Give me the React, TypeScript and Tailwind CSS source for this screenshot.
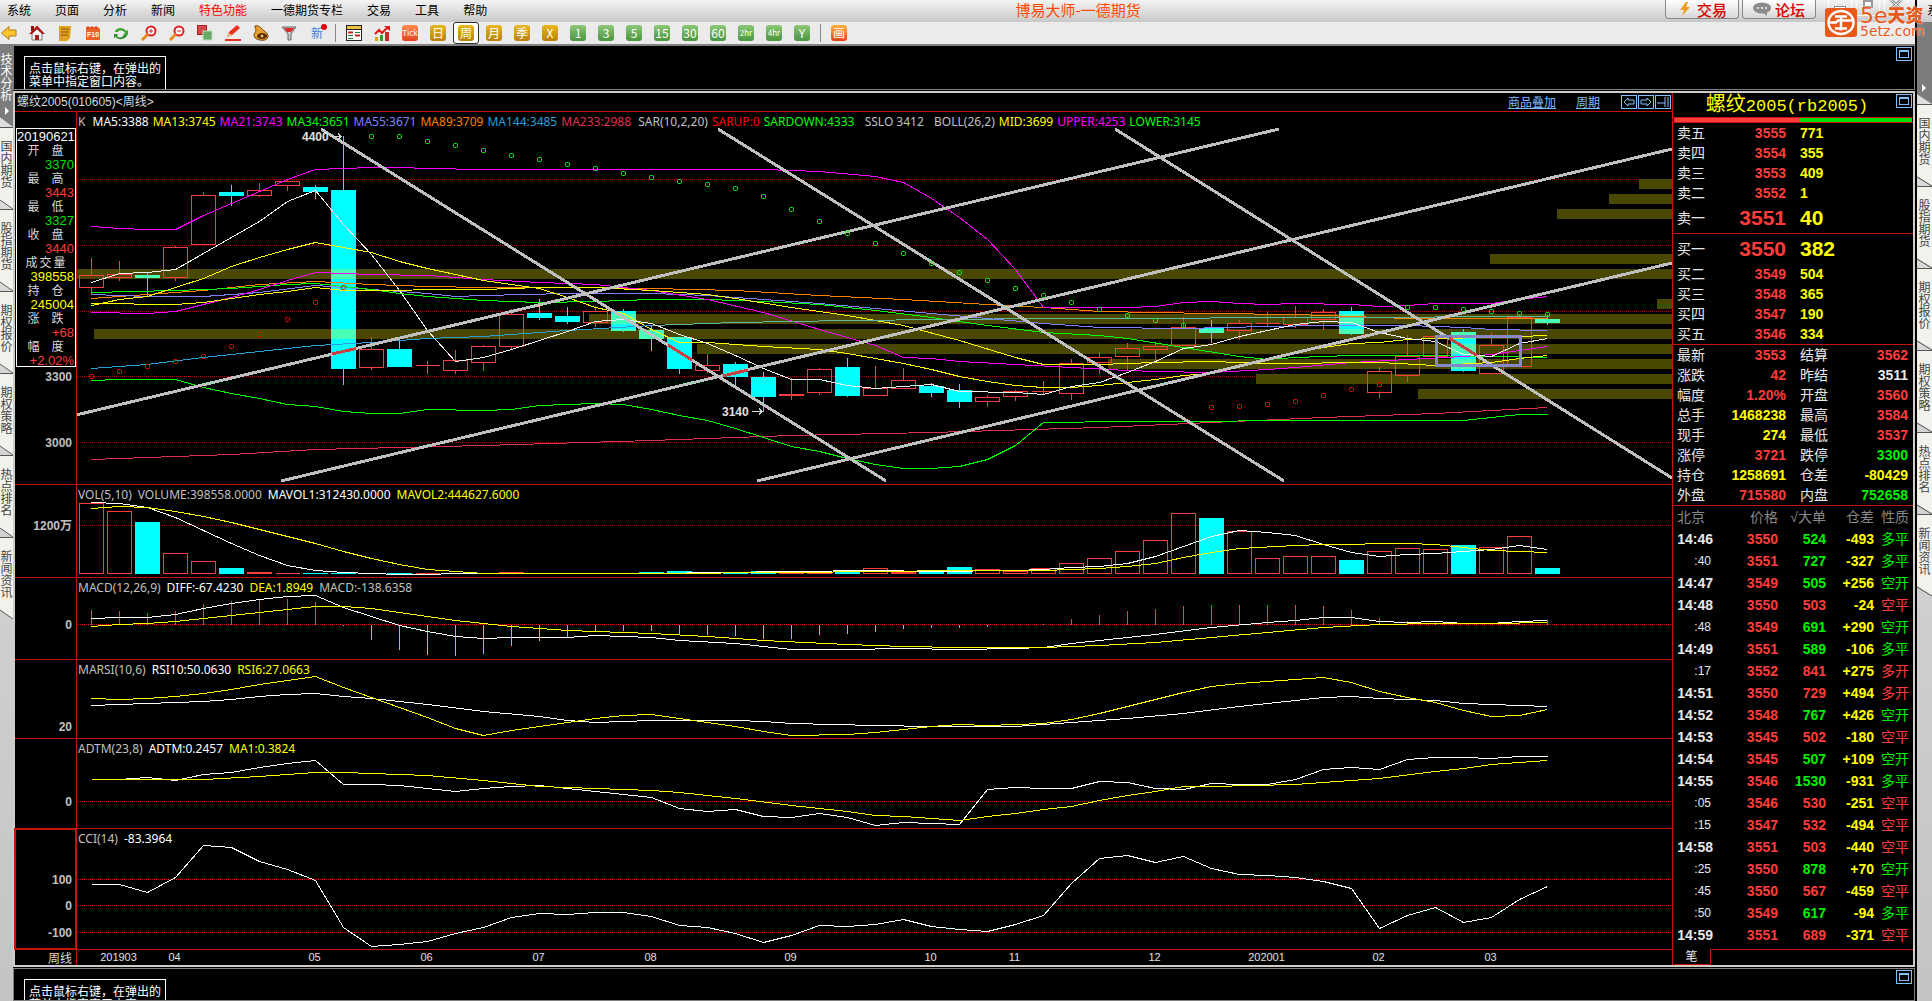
import type { ReactNode } from "react"
import clsx from "clsx"

// x of the n-th weekly bar
const barX = (i: number) => 91.5 + 28 * i

const menus = ["系统", "页面", "分析", "新闻", "特色功能", "一德期货专栏", "交易", "工具", "帮助"]
const sideTabs = ["国内期货", "股指期货", "期权报价", "期权策略", "热点排名", "新闻资讯"]

// type, high, body top, body bottom, low
type Candle = ["r" | "c", number, number, number, number]

const candles: Candle[] = [
  ["r", 258, 275, 287, 294], ["r", 261, 274, 277, 281], ["c", 273, 275, 277, 296], ["r", 246, 247, 277, 281],
  ["r", 192, 195, 244, 244], ["c", 185, 192, 195, 206], ["r", 183, 190, 195, 197], ["r", 180, 181, 185, 191],
  ["c", 185, 187, 191, 199], ["c", 136, 190, 368, 385], ["r", 337, 349, 367, 370], ["c", 341, 349, 366, 366],
  ["r", 361, 365, 365, 374], ["r", 350, 360, 370, 374], ["r", 345, 346, 362, 371], ["r", 309, 314, 346, 349],
  ["c", 299, 313, 317, 320], ["c", 307, 316, 321, 324], ["r", 306, 311, 322, 327], ["c", 309, 311, 330, 332],
  ["c", 325, 330, 338, 351], ["c", 337, 337, 368, 374], ["r", 354, 365, 370, 373], ["c", 362, 364, 376, 388],
  ["c", 372, 377, 396, 412], ["r", 378, 394, 395, 400], ["r", 368, 369, 392, 395], ["c", 358, 367, 395, 397],
  ["r", 366, 388, 395, 396], ["r", 368, 380, 388, 388], ["c", 383, 386, 392, 397], ["c", 384, 390, 401, 408],
  ["r", 395, 397, 401, 407], ["r", 390, 391, 396, 401], ["r", 381, 391, 391, 394], ["r", 359, 363, 393, 400],
  ["r", 352, 357, 362, 374], ["r", 343, 348, 356, 370], ["r", 343, 346, 349, 360], ["r", 317, 327, 345, 345],
  ["c", 320, 328, 332, 343], ["r", 320, 323, 330, 340], ["r", 312, 323, 323, 327], ["r", 306, 317, 324, 328],
  ["r", 309, 312, 319, 330], ["c", 307, 311, 333, 335], ["r", 367, 371, 392, 398], ["r", 335, 356, 375, 382],
  ["r", 335, 336, 356, 356], ["c", 329, 332, 370, 372], ["r", 333, 345, 373, 373], ["r", 314, 317, 366, 366],
  ["c", 315, 319, 322, 325],
]

// "bar,y" pairs
const kLines: [string, string][] = [
  ["#ff8000", "0,298 2,294 4,290 6,284 8,281 10,284 12,286 14,287 17,287 20,288 23,290 26,295 29,299 32,304 34,307 36,311 40,313 43,314 46,317 47,318 52,318"],
  ["#8080ff", "0,294 2,296 4,296 6,292 8,285 10,289 12,293 13,296 14,295 17,293 20,293 22,295 24,299 26,303 28,308 30,313 32,318 34,323 36,327 39,328 42,326 44,325 47,325 49,327 50,329 52,330"],
  ["#00ff00", "0,292 3,290 5,288 7,284 8,283 9,286 10,289 11,293 12,296 14,300 16,302 18,301 20,299 22,299 24,301 26,304 28,310 30,317 32,325 34,332 36,335 37,338 39,347 41,356 42,359 43,357 45,355 47,355 50,356 52,357"],
  ["#ff00ff", "0,312 2,313 3,311 4,304 5,297 6,289 7,280 8,272 10,274 12,275 14,279 16,282 18,284 20,290 22,299 24,312 26,329 28,345 29,357 30,358 31,361 33,364 35,367 37,370 38,371 40,372 42,369 43,367 45,362 47,359 49,356 50,354 51,350 52,346"],
  ["#ffff00", "0,303 3,304 4,302 5,298 6,294 7,291 8,287 9,290 14,289 16,287 18,287 20,290 22,294 23,298 25,307 27,315 29,325 31,340 33,357 34,364 36,364 38,362 40,361 42,363 46,362 48,365 50,362 51,358 52,355"],
  ["#ffff00", "0,305 1,299 2,296 3,287 4,278 5,266 6,257 7,249 8,242 9,247 10,252 11,261 12,268 13,274 14,280 16,288 17,297 18,307 19,313 20,329 21,342 22,342 24,346 26,349 27,353 28,358 29,363 30,369 31,376 32,381 33,385 34,387 35,387 36,385 37,382 38,379 39,375 40,373 41,366 42,358 43,352 44,347 45,343 46,342 47,339 48,338 50,337 52,335"],
  ["#2a9fd8", "0,368 2,364 4,357 6,351 8,345 10,342 12,338 14,336 17,330 20,325"],
  ["#5fb8a0", "20,325 23,322 27,320 34,318 36,318 52,316"],
  ["#e03050", "0,459 5,454 8,449 14,445 20,440 25,435 30,432 36,427 40,422 44,417 48,413 52,407"],
  ["#00ff00", "0,380 1,379 3,379 4,387 5,393 6,398 7,404 8,406 9,411 10,413 11,413 12,409 14,410 15,409 16,405 18,403 19,404 20,409 21,415 22,420 23,428 24,437 25,446 26,451 27,458 28,464 29,468 30,468 31,466 32,459 33,445 34,422 37,421 45,420 49,420 50,417 51,414 52,414"],
  ["#ff00ff", "0,226 1,228 2,229 3,229 4,215 5,203 6,191 7,179 8,169 9,168 10,167 11,167 12,168 14,169 21,169 24,169 26,171 28,176 29,182 30,198 31,217 32,239 33,269 34,307 37,307 38,306 39,302 40,301 41,303 42,304 43,303 45,304 46,306 47,305 48,303 50,303 51,299 52,296"],
  ["#f0f0f0", "0,282 1,273 2,272 3,269 4,253 5,237 6,221 7,201 8,190 9,224 10,254 11,290 12,330 13,361 14,357 15,349 16,340 17,331 18,321 19,319 20,323 21,334 22,343 23,355 24,368 25,379 26,379 27,385 28,388 29,386 30,384 31,391 33,392 34,394 35,386 36,382 37,372 38,361 39,348 40,344 41,336 42,330 43,324 44,321 45,322 46,332 47,338 48,341 49,354 50,356 51,343 52,338"],
]

const sarUp = "0,376 1,371 2,366 3,361 4,356 5,346 6,334 7,319 8,302 9,287 40,407 41,406 42,404 43,401 44,395 45,389 46,384"
const sarDown =
  "10,136 11,136 12,141 13,145 14,150 15,155 16,159 17,164 18,168 19,173 20,177 21,181 22,184 23,188 24,196 25,209 26,221 27,233 28,243 29,253 30,263 31,272 32,280 33,288 34,295 35,302 36,309 37,315 38,320 39,325 47,307 48,307 49,309 50,311 51,313 52,314"

// volume profile: left edge, top
const profile = [
  [1639, 179], [1609, 194], [1557, 209], [1490, 254], [77, 269], [1657, 299],
  [589, 314], [94, 329], [697, 344], [1108, 359], [1256, 374], [1418, 389],
]

const trendLines = [
  [76, 415, 1279, 129], [281, 481, 1672, 149], [757, 481, 1672, 263],
  [321, 129, 886, 481], [718, 129, 1284, 481], [1115, 129, 1672, 478],
]

const volumes =
  "r503 r511 c522 r553 r561 c568 r572 r573 c573 c573 r573 c573 r573 r573 c573 r572 r573 c573 r573 r573 c572 c571 r572 c572 c571 r571 r572 c570 r568 r572 c570 c567 r569 r571 r568 r563 r558 r551 r540 r513 c518 r531 r558 r556 r556 c560 r551 r548 r549 c545 r547 r536 c568".split(" ")

const macdBars = [
  610, 611, 613, 611, 604, 601, 599, 599, 602, 626, 640, 650, 655, 656, 654, 646, 641, 637, 632, 631, 631, 634, 635, 636, 639, 639, 635,
  634, 632, 629, 628, 628, 627, 625, 624, 619, 615, 611, 609, 606, 605, 605, 605, 605, 606, 610, 618, 621, 621, 625, 625, 621, 620,
]

const volMa1 = "0,502 1,503 2,507 3,517 4,530 5,543 6,555 7,565 8,570 9,572 11,574 14,573 20,573 25,571 28,570 30,571 33,570 34,569 35,567 36,566 37,563 38,556 39,546 40,536 41,530 42,532 43,535 44,544 45,552 46,556 47,554 48,553 49,551 50,549 51,545 52,549"
const volMa2 = "0,508 1,506 2,507 3,511 4,516 5,522 6,529 7,536 8,543 9,551 10,558 11,564 12,569 13,571 14,573 20,573 25,572 28,571 31,570 34,570 36,568 37,566 38,563 39,557 40,552 41,548 43,545 44,544 45,544 46,543 47,543 48,544 49,547 50,550 52,552"
const diff = "0,618 1,617 2,617 3,614 4,608 5,603 6,599 7,596 8,595 9,607 10,616 11,625 12,631 13,636 14,638 15,637 17,637 18,635 20,637 21,640 23,643 25,649 27,649 29,648 31,649 33,648 34,647 35,643 36,640 38,634 40,627 42,622 43,620 44,617 45,617 46,621 47,622 48,621 49,623 50,623 51,621 52,620"
const dea = "0,626 1,624 2,623 3,621 4,618 5,615 6,612 7,609 8,606 9,606 10,608 11,612 12,616 13,620 14,623 15,626 17,630 20,633 22,636 24,640 27,644 29,646 31,647 34,647 36,645 38,642 40,637 42,632 44,627 46,624 48,623 50,623 52,622"
const rsi10 = "0,705 3,702 4,701 5,699 6,696 7,694 8,693 9,696 10,698 12,704 14,711 16,716 17,720 18,722 20,720 23,720 24,721 25,723 28,725 30,726 33,726 35,722 37,718 39,713 41,706 43,700 44,697 45,696 46,698 48,700 49,703 52,706"
const rsi6 = "0,698 1,699 2,698 3,696 4,693 5,689 6,684 7,680 8,676 9,687 10,697 11,707 12,717 13,728 14,735 15,730 16,726 17,722 18,718 19,715 20,714 21,718 22,722 23,726 24,731 25,735 27,734 28,732 30,726 31,724 32,725 34,723 35,719 36,713 37,706 38,699 39,692 40,686 41,683 43,679 44,677 45,682 46,691 47,697 48,702 49,710 50,716 51,715 52,709"
const adtm = "0,779 1,779 2,777 3,780 4,774 5,772 6,767 7,763 8,760 9,784 10,784 11,785 12,788 13,791 14,788 15,786 16,785 17,788 18,791 19,794 20,797 21,808 22,811 23,809 24,816 25,817 26,813 27,817 28,825 29,822 31,824 32,789 33,787 34,788 35,788 36,781 37,782 38,788 39,789 40,783 41,784 42,784 43,779 44,769 45,767 46,769 47,759 48,757 49,757 50,758 51,756 52,756"
const adtmMa = "0,779 4,779 6,776 8,772 9,772 12,775 14,780 16,786 18,788 20,790 21,792 23,798 25,805 27,811 28,815 29,816 31,820 32,816 33,813 34,809 35,806 36,800 37,795 38,791 39,786 40,786 43,784 46,778 48,771 49,768 50,764 52,760"
const cci = "0,884 1,884 2,892 3,877 4,845 5,847 6,861 7,869 8,880 9,927 10,946 11,944 12,941 13,933 14,927 15,917 16,913 17,914 18,912 19,912 20,916 21,925 22,927 23,933 24,942 25,935 26,925 27,926 28,924 29,919 30,926 31,929 32,931 33,924 34,915 35,883 36,858 37,855 38,862 39,856 40,868 41,874 42,875 43,877 44,881 45,888 46,928 47,915 48,907 49,922 50,917 51,899 52,886"

const months: [string, number][] = [
  ["201903", 1], ["04", 3], ["05", 8], ["06", 12], ["07", 16], ["08", 20], ["09", 25], ["10", 30], ["11", 33], ["12", 38],
  ["202001", 42], ["02", 46], ["03", 50],
]

const info = [
  ["开盘", "3370", "text-[#00e000]"],
  ["最高", "3443", "text-[#ff3c3c]"],
  ["最低", "3327", "text-[#00e000]"],
  ["收盘", "3440", "text-[#ff3c3c]"],
  ["成交量", "398558", "text-[#ffff00]"],
  ["持仓", "245004", "text-[#ffff00]"],
  ["涨跌", "+68", "text-[#ff3c3c]"],
  ["幅度", "+2.02%", "text-[#ff3c3c]"],
]

const asks = [["卖五", "3555", "771"], ["卖四", "3554", "355"], ["卖三", "3553", "409"], ["卖二", "3552", "1"], ["卖一", "3551", "40"]]
const bids = [["买一", "3550", "382"], ["买二", "3549", "504"], ["买三", "3548", "365"], ["买四", "3547", "190"], ["买五", "3546", "334"]]

const R = "text-[#ff3c3c]"
const G = "text-[#00f000]"
const Y = "text-[#ffff00]"
const W = "text-[#e8e8e8]"

const stats = [
  ["最新", "3553", R, "结算", "3562", R],
  ["涨跌", "42", R, "昨结", "3511", W],
  ["幅度", "1.20%", R, "开盘", "3560", R],
  ["总手", "1468238", Y, "最高", "3584", R],
  ["现手", "274", Y, "最低", "3537", R],
  ["涨停", "3721", R, "跌停", "3300", G],
  ["持仓", "1258691", Y, "仓差", "-80429", Y],
  ["外盘", "715580", R, "内盘", "752658", G],
]

const ticks = [
  ["14:46", "3550", "524", "-493", "多平", G], [":40", "3551", "727", "-327", "多平", G],
  ["14:47", "3549", "505", "+256", "空开", G], ["14:48", "3550", "503", "-24", "空平", R],
  [":48", "3549", "691", "+290", "空开", G], ["14:49", "3551", "589", "-106", "多平", G],
  [":17", "3552", "841", "+275", "多开", R], ["14:51", "3550", "729", "+494", "多开", R],
  ["14:52", "3548", "767", "+426", "空开", G], ["14:53", "3545", "502", "-180", "空平", R],
  ["14:54", "3545", "507", "+109", "空开", G], ["14:55", "3546", "1530", "-931", "多平", G],
  [":05", "3546", "530", "-251", "空平", R], [":15", "3547", "532", "-494", "空平", R],
  ["14:58", "3551", "503", "-440", "空平", R], [":25", "3550", "878", "+70", "空开", G],
  [":45", "3550", "567", "-459", "空平", R], [":50", "3549", "617", "-94", "多平", G],
  ["14:59", "3551", "689", "-371", "空平", R],
]

const toPoints = (data: string) =>
  data.split(" ").map((p) => {
    const [i, y] = p.split(",").map(Number)
    return [barX(i), y + 0.5]
  })

function Curve({ data, color }: { data: string; color: string }) {
  return <polyline points={toPoints(data).map((p) => p.join(",")).join(" ")} fill="none" stroke={color} strokeWidth="1" />
}

function Grid({ y, color = "#a80808" }: { y: number; color?: string }) {
  return <line x1="78" x2="1671" y1={y + 0.5} y2={y + 0.5} stroke={color} strokeDasharray="1 1" />
}

function Dots({ data, color }: { data: string; color: string }) {
  return (
    <>
      {toPoints(data).map(([x, y]) => (
        <rect key={x} x={x - 2} y={y - 2} width="4" height="4" rx="1" fill="none" stroke={color} shapeRendering="auto" />
      ))}
    </>
  )
}

interface PanelProps {
  top: number
  height: number
  heightClass: string
  legend: [string, string][]
  legendGap?: string
  labels: [string, number][]
  selected?: boolean
  aside?: ReactNode
  children: ReactNode
}

function Panel({ top, height, heightClass, legend, legendGap = "gap-1.5", labels, selected, aside, children }: PanelProps) {
  return (
    <section className={clsx("flex border-t border-[#c81408]", heightClass)}>
      <div className={clsx("relative w-[61px] shrink-0", selected && "outline-2 -outline-offset-1 outline-[#c81408]")}>
        {aside}
        <svg className="absolute inset-0 h-full w-full" viewBox={`15 ${top} 61 ${height}`} preserveAspectRatio="xMaxYMin meet">
          {labels.map(([text, y]) => (
            <text key={text} x="72" y={y + 5} textAnchor="end" className="fill-[#c0c0c0] font-['Liberation_Sans','Noto_Sans_CJK_SC',sans-serif] text-[12px] font-bold">
              {text}
            </text>
          ))}
        </svg>
      </div>
      <div className="relative min-w-0 flex-1 border-l border-[#c81408]">
        <svg className="block h-full w-full" viewBox={`77 ${top} 1595 ${height}`} preserveAspectRatio="none" shapeRendering="crispEdges">
          {children}
        </svg>
        <div className={clsx("absolute top-0 left-0 flex pl-px font-['Noto_Sans',sans-serif] text-[12px] leading-5 whitespace-pre", legendGap)}>
          {legend.map(([text, color]) => (
            <span key={text} className={color}>
              {text}
            </span>
          ))}
        </div>
      </div>
    </section>
  )
}

function WindowButton() {
  return (
    <button aria-label="最大化" className="block h-[14px] w-4 shrink-0 border border-[#80c0ff] p-[2px]">
      <span className="block h-full w-full border border-t-2 border-[#80c0ff]" />
    </button>
  )
}

function HintWindow({ className }: { className: string }) {
  return (
    <div className={clsx("flex items-start justify-between overflow-hidden border border-[#808080] pr-[2px]", className)}>
      <p className="mt-[10px] ml-[10px] h-[60px] w-[142px] border border-white pt-1 pl-1 text-[12px] leading-[13px] text-white">
        点击鼠标右键，在弹出的
        <br />
        菜单中指定窗口内容。
      </p>
      <div className="pt-px">
        <WindowButton />
      </div>
    </div>
  )
}

function SideTabs({ firstLabel, className }: { firstLabel: string; className: string }) {
  return (
    <nav className={clsx("overflow-hidden bg-linear-to-b from-[#e0e0e0] to-[#c4c4c4] text-[12px] leading-3", className)}>
      <button className="relative flex h-[82px] w-full flex-col items-center bg-[#7c7c7c] pt-2 text-white [clip-path:polygon(0_0,100%_0,100%_100%,0_88%)]">
        <span className="w-3">{firstLabel}</span>
        <svg className="absolute bottom-3 left-1" width="6" height="8">
          <path d="M1 0v8l4-4z" fill="#fff" />
        </svg>
      </button>
      {sideTabs.map((t) => (
        <button key={t} className="relative flex h-[82px] w-full justify-center border-t border-[#555] pt-3 text-[#444]">
          <svg className="absolute inset-0 h-full w-full" viewBox="0 0 14 81" preserveAspectRatio="none">
            <path d="M0 0H14V81L0 72Z" fill="#f2f2ec" />
            <path d="M0 72L14 81" stroke="#555" />
          </svg>
          <span className="relative w-3">{t}</span>
        </button>
      ))}
    </nav>
  )
}

const toolIcons: [string, ReactNode][] = [
  ["后退", <path d="M0.500 8L8 1.500v3.500h7v6H8v3.500z" fill="#fdc52f" stroke="#b87a10" />],
  ["首页", <><path d="M3 8v7h10V8L8 4z" fill="#f4f4f4" stroke="#777" /><path d="M0 9L8 0.500 16 9h-3L8 4 3 9z" fill="#b01818" /><path d="M2 1h3v5H2z" fill="#8c1010" /><path d="M6 10h4v5H6z" fill="#a02020" /></>],
  ["资讯", <><path d="M2 1h12l-1 12-3 3H2z" fill="#e0a018" /><path d="M4 4h8M4 7h8M4 10h7" stroke="#8a5a05" /></>],
  ["F10", <><path d="M1 2h12l2 2v11H1z" fill="#f0602c" /><path d="M3 1v3M7 1v3M11 1v3" stroke="#c03010" /><text x="2" y="12" className="fill-white font-['Liberation_Sans'] text-[7px] font-bold">F10</text></>],
  ["刷新", <><path d="M2 7c0-4 8-6 11-1l2-1v5h-5l2-2C10 5 6 5 5 7z" fill="#3fa535" /><path d="M14 10c-1 4-8 6-11 2l-2 1V9h4l-1 2c2 2 5 2 7-1z" fill="#2f8f28" /></>],
  ["放大", <><circle cx="10" cy="6" r="4.500" fill="#fff" stroke="#e02020" strokeWidth="2" /><path d="M8 6h4M10 4v4" stroke="#e02020" /><path d="M7 9l-6 6" stroke="#e88a20" strokeWidth="3" /></>],
  ["缩小", <><circle cx="10" cy="6" r="4.500" fill="#fff" stroke="#e02020" strokeWidth="2" /><path d="M8 6h4" stroke="#e02020" /><path d="M7 9l-6 6" stroke="#e88a20" strokeWidth="3" /></>],
  ["叠加", <><rect x="0.500" y="0.500" width="9" height="9" fill="#d04848" stroke="#a82020" /><rect x="6" y="6" width="9" height="9" fill="#6aa868" stroke="#b8e0b8" /></>],
  ["画线", <><path d="M2 12l2-5 8-7 3 3-8 7z" fill="#e83020" /><path d="M2 12l2-4 3 2z" fill="#f0c080" /><path d="M0 15h16" stroke="#e83020" strokeWidth="2" /></>],
  ["预警", <><path d="M2 1c3-1 5 1 7 3s6 4 6 7-3 5-8 4-6-3-6-5 2-3 2-5-2-3-1-4z" fill="#e8a030" stroke="#7a3d08" /><ellipse cx="9" cy="11" rx="5" ry="3" fill="#5a2a08" /><circle cx="9" cy="11" r="1.500" fill="#f0c060" /></>],
  ["筛选", <><path d="M1 2h14L10 9v6H7V9z" fill="#c8c8c8" stroke="#666" /><path d="M3 3h10l-3 4H6z" fill="#e02828" /></>],
]

// label, tile colour
const periods: [string, string][] = [
  ["Tick", "from-[#ff8a50] to-[#e83c20]"],
  ["日", "from-[#e8b820] to-[#b88008]"],
  ["周", "from-[#e8b820] to-[#b88008]"],
  ["月", "from-[#e8b820] to-[#b88008]"],
  ["季", "from-[#e8b820] to-[#b88008]"],
  ["X", "from-[#e8b820] to-[#b88008]"],
  ["1", "from-[#8cc878] to-[#4a9440]"],
  ["3", "from-[#8cc878] to-[#4a9440]"],
  ["5", "from-[#8cc878] to-[#4a9440]"],
  ["15", "from-[#8cc878] to-[#4a9440]"],
  ["30", "from-[#8cc878] to-[#4a9440]"],
  ["60", "from-[#8cc878] to-[#4a9440]"],
  ["2hr", "from-[#8cc878] to-[#4a9440]"],
  ["4hr", "from-[#8cc878] to-[#4a9440]"],
  ["Y", "from-[#8cc878] to-[#4a9440]"],
]

function Tile({ label, color, active }: { label: string; color: string; active?: boolean }) {
  return (
    <button
      className={clsx(
        "flex h-[22px] w-[26px] items-center justify-center rounded-[3px]",
        active && "border border-[#333] bg-white",
      )}
    >
      <span
        className={clsx(
          "flex h-4 w-4 items-center justify-center rounded-[3px] bg-linear-to-b leading-none text-white",
          label.length > 2 ? "text-[8px]" : "text-[12px]",
          color,
        )}
      >
        {label}
      </span>
    </button>
  )
}

function Toolbar() {
  return (
    <div className="-ml-[5px] flex h-[22px] items-center">
      {toolIcons.map(([name, icon]) => (
        <button key={name} aria-label={name} className="flex w-7 justify-center">
          <svg width="16" height="16" viewBox="0 0 16 16">{icon}</svg>
        </button>
      ))}
      <button className="relative w-7 text-center text-[12px] text-[#3a80d8]">
        新<span className="absolute top-0 right-1 h-[6px] w-[6px] rounded-full bg-red-600" />
      </button>
      <span className="mx-1 h-[18px] w-px bg-[#888]" />
      <button aria-label="报价" className="flex w-7 justify-center">
        <svg width="16" height="16" viewBox="0 0 16 16">
          <rect x="0.5" y="0.5" width="15" height="15" fill="#fff" stroke="#222" />
          <path d="M1 1h14v3H1z" fill="#f0c040" />
          <path d="M0 4.500h16" stroke="#222" />
          <path d="M2 7.500h5M9 10.500h5" stroke="#d02020" strokeWidth="2" />
          <path d="M2 10.500h5M9 7.500h5M2 13.500h5" stroke="#208030" />
        </svg>
      </button>
      <button aria-label="走势" className="flex w-7 justify-center">
        <svg width="16" height="16" viewBox="0 0 16 16">
          <path d="M1 12h3v4H1z" fill="#e0a020" />
          <path d="M6 10h3v6H6z" fill="#30a030" />
          <path d="M11 7h4v9h-4z" fill="#d02828" />
          <path d="M1 9l4-4 3 3 6-6" fill="none" stroke="#e01818" strokeWidth="2" />
          <path d="M10 1h6v5z" fill="#e01818" />
        </svg>
      </button>
      {periods.map(([label, color]) => (
        <div key={label} className="flex w-7 justify-center">
          <Tile label={label} color={color} active={label === "周"} />
        </div>
      ))}
      <span className="mx-1 h-[18px] w-px bg-[#888]" />
      <div className="flex w-7 justify-center">
        <Tile label="画" color="from-[#ffb040] to-[#e83c18]" />
      </div>
    </div>
  )
}

function MenuBar() {
  return (
    <header className="flex h-[22px] items-start bg-linear-to-b from-[#f4f4f4] to-[#c8c8c8] pl-[7px]">
      <nav className="flex gap-6 text-[12px] leading-5 text-black">
        {menus.map((m) => (
          <button key={m} className={clsx("whitespace-nowrap", m === "特色功能" && "text-[#ff0000]")}>
            {m}
          </button>
        ))}
      </nav>
      <h1 className="flex-1 pl-1 text-center text-[15px] leading-5 text-[#ff4800]">博易大师-一德期货</h1>
      <div className="flex gap-[3px]">
        <button className="flex h-[19px] w-[74px] items-center justify-center gap-1 rounded-b-[4px] border border-t-0 border-[#888] bg-linear-to-b from-white to-[#d8d8d8] text-[15px] leading-none font-medium text-[#d80000]">
          <svg width="16" height="16" viewBox="0 0 16 16">
            <path d="M9 1L3 9h4l-2 6 8-9H9l2-5z" fill="#f09a18" />
          </svg>
          交易
        </button>
        <button className="flex h-[19px] w-[74px] items-center justify-center gap-1 rounded-b-[4px] border border-t-0 border-[#888] bg-linear-to-b from-white to-[#d8d8d8] text-[15px] leading-none font-medium text-[#d80000]">
          <svg width="18" height="14" viewBox="0 0 18 14">
            <ellipse cx="9" cy="6" rx="9" ry="5.500" fill="#8c8c8c" />
            <path d="M9 10l5 4v-5z" fill="#8c8c8c" />
            <path d="M4 5h2v2H4zM8 5h2v2H8zM12 5h2v2h-2z" fill="#ddd" />
          </svg>
          论坛
        </button>
      </div>
      <div className="ml-3 flex w-[87px] gap-1">
        <button aria-label="最小化" className="flex h-4 w-6 items-center justify-center border border-t-0 border-[#f8f8f8]">
          <span className="h-1 w-3 border border-[#888] bg-white" />
        </button>
        <button aria-label="还原" className="flex h-4 w-6 justify-center border border-t-0 border-[#f8f8f8]">
          <span className="h-2 w-[10px] border-2 border-[#999] bg-white" />
        </button>
        <button aria-label="关闭" className="flex h-4 w-6 justify-center border border-t-0 border-[#f8f8f8]">
          <svg width="12" height="9" viewBox="0 0 12 9">
            <path d="M1 0l10 9M11 0L1 9" stroke="#888" strokeWidth="3" />
            <path d="M1 0l10 9M11 0L1 9" stroke="#fff" />
          </svg>
        </button>
      </div>
    </header>
  )
}

function Logo() {
  return (
    <div className="absolute top-[8px] right-[5px] flex gap-[3px] text-[#e85818]">
      <svg width="32" height="29" viewBox="0 0 32 29">
        <rect width="32" height="29" rx="3" fill="#e85818" />
        <ellipse cx="16" cy="14.500" rx="12.500" ry="11.500" fill="none" stroke="#fff" strokeWidth="2.500" />
        <path d="M10 8.500h12M16 8.500v14M5 14.500h6l2-2h14M10 20.500h12" stroke="#fff" strokeWidth="2.500" fill="none" />
      </svg>
      <div className="w-[67px] font-['DejaVu_Sans','Noto_Sans_CJK_SC',sans-serif] whitespace-nowrap [text-shadow:0_0_2px_#fff]">
        <p className="flex items-center leading-4">
          <span className="text-[22px]">5e</span>
          <b className="text-[18px] font-black">天资</b>
        </p>
        <p className="text-[14px] leading-[14px]">5etz.com</p>
      </div>
    </div>
  )
}

function Profile({ fill, clipPath }: { fill: string; clipPath?: string }) {
  return (
    <g fill={fill} clipPath={clipPath}>
      {profile.map(([x, y]) => (
        <rect key={y} x={x} y={y} width={1672 - x} height="10" />
      ))}
    </g>
  )
}

function Candles() {
  return (
    <>
      <clipPath id="falling">
        {candles.map(([type, , top, bottom], i) =>
          type === "c" ? <rect key={i} x={barX(i) - 12.5} y={top} width="25" height={bottom - top + 1} /> : null,
        )}
      </clipPath>
      {candles.map(([type, high, top, bottom, low], i) => {
        const x = barX(i)
        if (type === "c") {
          return (
            <g key={i} fill="#00ffff">
              <rect x={x - 0.5} y={high} width="1" height={low - high} />
              <rect x={x - 12.5} y={top} width="25" height={bottom - top + 1} />
            </g>
          )
        }
        return (
          <path
            key={i}
            d={`M${x} ${high}V${top}M${x} ${bottom}V${low}M${x - 12} ${top + 0.5}h24V${bottom + 0.5}h-24z`}
            fill="none"
            stroke="#ff3c3c"
          />
        )
      })}
      <Profile fill="#48ffb8" clipPath="url(#falling)" />
    </>
  )
}

function ChartArea() {
  return (
    <div className="flex min-w-0 flex-1 flex-col">
      <div className="flex h-[18px] items-center text-[12px] leading-[18px]">
        <span className="flex-1 pl-[2px] font-['Liberation_Sans','Noto_Sans_CJK_SC',sans-serif] text-[#d8d8d8]">螺纹2005(010605)&lt;周线&gt;</span>
        <a href="#overlay" className="mr-5 text-[#80b8ff] underline">商品叠加</a>
        <a href="#period" className="mr-[21px] text-[#80b8ff] underline">周期</a>
        <div className="flex gap-px pr-px text-[#80c0ff]">
          {["M2 6l4-4v2h6v4H6v2z", "M12 6L8 2v2H2v4h6v2z", "M1 7h8M9 1v10M11 2h2M11 4h2M11 6h2M11 8h2M11 10h2"].map((d) => (
            <button key={d} aria-label="窗口" className="h-[14px] w-4 border border-current">
              <svg width="14" height="12" viewBox="0 0 14 12">
                <path d={d} fill="none" stroke="currentColor" />
              </svg>
            </button>
          ))}
        </div>
      </div>

      <Panel
        top={112}
        height={372}
        heightClass="h-[373px]"
        labels={[["3300", 376], ["3000", 442]]}
        legendGap="gap-1"
        legend={[
          ["K ", "text-[#c0c0c0]"], ["MA5:3388", "text-white"], ["MA13:3745", "text-[#ffff00]"], ["MA21:3743", "text-[#ff00ff]"],
          ["MA34:3651", "text-[#00ff00]"], ["MA55:3671", "text-[#8080ff]"], ["MA89:3709", "text-[#ff8000]"],
          ["MA144:3485", "text-[#2a9fd8]"], ["MA233:2988 ", "text-[#e03050]"], ["SAR(10,2,20)", "text-[#c0c0c0]"],
          ["SARUP:0", "text-[#ff0000]"], ["SARDOWN:4333 ", "text-[#00ff00]"], [" SSLO 3412 ", "text-[#c0c0c0]"],
          [" BOLL(26,2)", "text-[#c0c0c0]"], ["MID:3699", "text-[#ffff00]"], ["UPPER:4253", "text-[#ff00ff]"],
          ["LOWER:3145", "text-[#00ff00]"],
        ]}
        aside={
          <div className="mt-4 ml-px h-[239px] border border-white pr-px text-right font-['Liberation_Sans','Noto_Sans_CJK_SC',sans-serif] text-[12px] leading-[14px]">
            <p className="pt-px text-[13px] text-white">20190621</p>
            {info.map(([label, value, color]) => (
              <dl key={label}>
                <dt className={clsx("flex justify-center text-[#d8d8d8]", label.length > 2 ? "gap-[2px]" : "gap-3")}>
                  {label.split("").map((c) => (
                    <span key={c}>{c}</span>
                  ))}
                </dt>
                <dd className={clsx("text-[13px]", color)}>{value}</dd>
              </dl>
            ))}
          </div>
        }
      >
        {[179, 245, 311, 376, 442].map((y) => (
          <Grid key={y} y={y} />
        ))}
        <Profile fill="#4a4800" />
        <Candles />
        {kLines.map(([color, data]) => (
          <Curve key={data} data={data} color={color} />
        ))}
        <g stroke="#c0c0c0" strokeWidth="3">
          {trendLines.map(([x1, y1, x2, y2]) => (
            <line key={x1} x1={x1} y1={y1} x2={x2} y2={y2} />
          ))}
        </g>
        <rect x="1436" y="336" width="84" height="29" fill="none" stroke="#8888c8" strokeWidth="3" />
        <path
          d="M332 354L356 348.500M668 345L692 360M723 376L748 370M1449 338L1477 355.500"
          fill="none"
          stroke="#c84040"
          strokeWidth="3"
        />
        <Dots data={sarUp} color="#ff0000" />
        <Dots data={sarDown} color="#00ff00" />
        <g className="fill-[#e0e0e0] font-['Liberation_Sans',sans-serif] text-[12px] font-bold">
          <text x="302" y="141">4400</text>
          <text x="722" y="416">3140</text>
        </g>
        <path d="M331 136.500h11M338 133.500l3 3-3 3M752 411.500h11M759 408.500l3 3-3 3" fill="none" stroke="#d8d8d8" />
      </Panel>

      <Panel
        top={485}
        height={92}
        heightClass="h-[93px]"
        labels={[["1200万", 525]]}
        legend={[
          ["VOL(5,10)", "text-[#c0c0c0]"], ["VOLUME:398558.0000", "text-[#c0c0c0]"],
          ["MAVOL1:312430.0000", "text-white"], ["MAVOL2:444627.6000", "text-[#ffff00]"],
        ]}
      >
        <Grid y={525} />
        {volumes.map((v, i) => {
          const top = Number(v.slice(1))
          return v[0] === "c" ? (
            <rect key={i} x={barX(i) - 12.5} y={top} width="25" height={574 - top} fill="#00ffff" />
          ) : (
            <path key={i} d={`M${barX(i) - 12} ${top + 0.5}h24V573.5h-24z`} fill="none" stroke="#ff3c3c" />
          )
        })}
        <Curve data={volMa1} color="#ffffff" />
        <Curve data={volMa2} color="#ffff00" />
      </Panel>

      <Panel
        top={578}
        height={81}
        heightClass="h-[82px]"
        labels={[["0", 624]]}
        legend={[
          ["MACD(12,26,9)", "text-[#c0c0c0]"], ["DIFF:-67.4230", "text-white"],
          ["DEA:1.8949", "text-[#ffff00]"], ["MACD:-138.6358", "text-[#c0c0c0]"],
        ]}
      >
        <Grid y={624} color="#d01808" />
        {macdBars.map((y, i) => (
          <line key={i} x1={barX(i)} x2={barX(i)} y1="624.5" y2={y} stroke={y > 624 ? "#00ffff" : "#ff3c3c"} />
        ))}
        <Curve data={diff} color="#ffffff" />
        <Curve data={dea} color="#ffff00" />
      </Panel>

      <Panel
        top={660}
        height={78}
        heightClass="h-[79px]"
        labels={[["20", 726]]}
        legend={[["MARSI(10,6)", "text-[#c0c0c0]"], ["RSI10:50.0630", "text-white"], ["RSI6:27.0663", "text-[#ffff00]"]]}
      >
        <Curve data={rsi10} color="#ffffff" />
        <Curve data={rsi6} color="#ffff00" />
      </Panel>

      <Panel
        top={739}
        height={89}
        heightClass="h-[90px]"
        labels={[["0", 801]]}
        legend={[["ADTM(23,8)", "text-[#c0c0c0]"], ["ADTM:0.2457", "text-white"], ["MA1:0.3824", "text-[#ffff00]"]]}
      >
        <Grid y={801} color="#d01808" />
        <Curve data={adtm} color="#ffffff" />
        <Curve data={adtmMa} color="#ffff00" />
      </Panel>

      <Panel
        top={829}
        height={120}
        heightClass="h-[121px]"
        selected
        labels={[["100", 879], ["0", 905], ["-100", 932]]}
        legend={[["CCI(14)", "text-[#c0c0c0]"], ["-83.3964", "text-white"]]}
      >
        <Grid y={879} color="#d01808" />
        <Grid y={905} color="#d01808" />
        <Grid y={932} color="#d01808" />
        <Curve data={cci} color="#ffffff" />
      </Panel>

      <div className="flex h-4 border-t border-[#c81408]">
        <span className="w-[61px] pr-1 text-right text-[12px] leading-[15px] text-[#d8d8d8]">周线</span>
        <svg className="h-full min-w-0 flex-1 border-l border-[#c81408]" viewBox="77 950 1595 15" preserveAspectRatio="none">
          {months.map(([m, i]) => (
            <text key={m} x={barX(i) - 1} y="961" textAnchor="middle" className="fill-[#e0e0e0] font-['Liberation_Sans',sans-serif] text-[11px]">
              {m}
            </text>
          ))}
        </svg>
      </div>
    </div>
  )
}

function QuoteRow({ row }: { row: string[] }) {
  const big = row[0] === "卖一" || row[0] === "买一"
  return (
    <tr className={big ? "h-[30px]" : "h-5"}>
      <th className="w-10 pl-1 text-left font-normal text-[#e8e8e8]">{row[0]}</th>
      <td className={clsx("w-[73px] text-right font-bold", R, big && "text-[21px]")}>{row[1]}</td>
      <td className={clsx("pl-[14px] font-bold", Y, big && "text-[21px]")}>{row[2]}</td>
    </tr>
  )
}

function QuotePanel() {
  return (
    <aside className="flex w-[241px] shrink-0 flex-col border-l border-[#c81408] font-['Liberation_Sans','Noto_Sans_CJK_SC',sans-serif] text-[14px] leading-5">
      <div className="relative flex h-6 items-center justify-center pr-3">
        <h2 className="text-[20px] leading-6 whitespace-nowrap text-[#ffff00]">
          螺纹<span className="font-['Liberation_Mono',monospace] text-[17px]">2005(rb2005)</span>
        </h2>
        <div className="absolute top-px right-px">
          <WindowButton />
        </div>
      </div>
      <div className="flex h-[6px] border-y border-[#c81408] px-px">
        <span className="w-[53%] bg-[#ff3c3c]" />
        <span className="flex-1 bg-[#00e000]" />
      </div>
      <table className="w-full table-fixed border-collapse">
        <tbody>{asks.map((r) => <QuoteRow key={r[0]} row={r} />)}</tbody>
      </table>
      <table className="w-full table-fixed border-separate border-spacing-0 border-t border-[#c81408]">
        <tbody>{bids.map((r) => <QuoteRow key={r[0]} row={r} />)}</tbody>
      </table>
      <table className="w-full table-fixed border-separate border-spacing-0 border-y border-[#c81408]">
        <tbody>
          {stats.map(([a, av, ac, b, bv, bc]) => (
            <tr key={a} className="h-5">
              <th className="w-10 pl-1 text-left font-normal text-[#e8e8e8]">{a}</th>
              <td className={clsx("w-[73px] text-right font-bold", ac)}>{av}</td>
              <th className="w-[50px] pl-[14px] text-left font-normal whitespace-nowrap text-[#e8e8e8]">{b}</th>
              <td className={clsx("pr-[5px] text-right font-bold", bc)}>{bv}</td>
            </tr>
          ))}
        </tbody>
      </table>
      <table className="w-full table-fixed border-collapse">
        <thead>
          <tr className="h-[22px] text-right text-[#888]">
            <th className="w-10 pl-1 text-left font-normal">北京</th>
            <th className="w-[65px] font-normal">价格</th>
            <th className="w-12 font-normal whitespace-nowrap">√大单</th>
            <th className="w-12 font-normal">仓差</th>
            <th className="pr-1 font-normal">性质</th>
          </tr>
        </thead>
        <tbody>
          {ticks.map(([time, price, lots, oi, kind, color]) => (
            <tr key={time} className="h-[22px] text-right font-bold">
              <td className={clsx("pl-1 text-[#e8e8e8]", time[0] === ":" && "pr-[2px] text-[12px] font-normal")}>{time}</td>
              <td className={R}>{price}</td>
              <td className={color}>{lots}</td>
              <td className={Y}>{oi}</td>
              <td className={clsx("pr-1 font-normal", color)}>{kind}</td>
            </tr>
          ))}
        </tbody>
      </table>
      <div className="mt-auto flex h-4 text-[12px] leading-[14px] text-[#e8e8e8]">
        <button className="w-[38px] rounded-b-[2px] border-r border-b border-[#c81408]">笔</button>
        <span className="flex-1 border-t border-[#c81408]" />
      </div>
    </aside>
  )
}

export default function App() {
  return (
    <div className="relative flex h-screen overflow-hidden bg-black font-['Noto_Sans_CJK_SC',sans-serif]">
      <div className="flex min-w-0 flex-1 flex-col">
        <div className="border-b border-[#808080] bg-[#ebebeb]">
          <MenuBar />
          <Toolbar />
        </div>
        <div className="flex min-h-0 flex-1">
          <SideTabs firstLabel="技术分析" className="w-[13px] shrink-0" />
          <main className="flex min-w-0 flex-1 flex-col">
            <HintWindow className="h-[45px]" />
            <div className="mt-px flex border-2 border-[#d0ccc8]">
              <ChartArea />
              <QuotePanel />
            </div>
            <HintWindow className="mt-px flex-1" />
          </main>
        </div>
      </div>
      <div className="ml-[2px] flex w-[15px] shrink-0 flex-col overflow-hidden">
        <span className="h-[22px] bg-linear-to-b from-[#f4f4f4] to-[#c8c8c8] pl-[10px] text-[12px] leading-5">系</span>
        <SideTabs firstLabel="" className="flex-1" />
      </div>
      <Logo />
    </div>
  )
}
